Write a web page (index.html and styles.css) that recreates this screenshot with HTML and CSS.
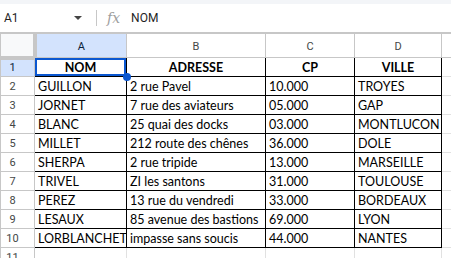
FILE: index.html
```html
<!doctype html>
<html lang="fr">
    <head>
        <meta charset="UTF-8" />
        <title>Feuille</title>
        <link rel="stylesheet" href="styles.css">
    </head>
    <body>
        <div class="topband"></div>
        <div class="formula-bar">
            <div class="namebox">
                <span class="cellref">A1</span>
                <span class="caret"></span>
            </div>
            <div class="divider"></div>
            <span class="fx">fx</span>
            <span class="formula">NOM</span>
        </div>
        <table class="sheet">
            <colgroup>
                <col class="c-row" />
                <col class="c-a" />
                <col class="c-b" />
                <col class="c-c" />
                <col class="c-d" />
                <col />
            </colgroup>
            <thead>
                <tr class="col-heads">
                    <th class="corner"></th>
                    <th class="active">A</th>
                    <th>B</th>
                    <th>C</th>
                    <th>D</th>
                    <th></th>
                </tr>
            </thead>
            <tbody>
                <tr>
                    <th class="rownum active">1</th>
                    <td class="data head selected">NOM<span class="handle"></span></td>
                    <td class="data head">ADRESSE</td>
                    <td class="data head">CP</td>
                    <td class="data head">VILLE</td>
                    <td></td>
                </tr>
                <tr><th class="rownum">2</th><td class="data">GUILLON</td><td class="data">2 rue Pavel</td><td class="data">10.000</td><td class="data">TROYES</td><td></td></tr>
                <tr><th class="rownum">3</th><td class="data">JORNET</td><td class="data">7 rue des aviateurs</td><td class="data">05.000</td><td class="data">GAP</td><td></td></tr>
                <tr><th class="rownum">4</th><td class="data">BLANC</td><td class="data">25 quai des docks</td><td class="data">03.000</td><td class="data">MONTLUCON</td><td></td></tr>
                <tr><th class="rownum">5</th><td class="data">MILLET</td><td class="data">212 route des chênes</td><td class="data">36.000</td><td class="data">DOLE</td><td></td></tr>
                <tr><th class="rownum">6</th><td class="data">SHERPA</td><td class="data">2 rue tripide</td><td class="data">13.000</td><td class="data">MARSEILLE</td><td></td></tr>
                <tr><th class="rownum">7</th><td class="data">TRIVEL</td><td class="data">ZI les santons</td><td class="data">31.000</td><td class="data">TOULOUSE</td><td></td></tr>
                <tr><th class="rownum">8</th><td class="data">PEREZ</td><td class="data">13 rue du vendredi</td><td class="data">33.000</td><td class="data">BORDEAUX</td><td></td></tr>
                <tr><th class="rownum">9</th><td class="data">LESAUX</td><td class="data">85 avenue des bastions</td><td class="data">69.000</td><td class="data">LYON</td><td></td></tr>
                <tr><th class="rownum">10</th><td class="data">LORBLANCHET</td><td class="data">impasse sans soucis</td><td class="data">44.000</td><td class="data">NANTES</td><td></td></tr>
                <tr><th class="rownum">11</th><td></td><td></td><td></td><td></td><td></td></tr>
            </tbody>
        </table>
    </body>
</html>
```

FILE: styles.css
```css
body {
    margin: 0;
    background-color: #fff;
    font-family: Roboto, "Liberation Sans", sans-serif;
    overflow: hidden;
}
.topband {
    height: 4px;
    background-color: #f3f5f8;
}
.formula-bar {
    display: flex;
    align-items: center;
    height: 29px;
    border-bottom: 1px solid #c7c7c7;
    box-sizing: border-box;
    color: #1f1f1f;
    font-size: 12px;
}
.namebox {
    display: flex;
    align-items: center;
    justify-content: space-between;
    width: 82px;
    padding-left: 4px;
    box-sizing: border-box;
}
.caret {
    width: 0;
    height: 0;
    border-left: 4px solid transparent;
    border-right: 4px solid transparent;
    border-top: 4px solid #444;
}
.divider {
    width: 1px;
    height: 16px;
    margin-left: 14px;
    background-color: #c7c7c7;
}
.fx {
    margin-left: 10px;
    font-family: "DejaVu Serif", serif;
    font-style: italic;
    font-size: 14px;
    color: #9e9e9e;
}
.formula {
    margin-left: 11px;
}
.sheet {
    border-collapse: collapse;
    table-layout: fixed;
    width: 470px;
}
.c-row { width: 34px; }
.c-a { width: 92px; }
.c-b { width: 139px; }
.c-c { width: 89px; }
.c-d { width: 87px; }
.sheet th,
.sheet td {
    padding: 0;
    height: 19px;
    border: 1px solid #e1e1e1;
    box-sizing: border-box;
}
.col-heads th {
    height: 24px;
    font-weight: normal;
    font-size: 11px;
    color: #444746;
    border-color: #c7c7c7;
    text-align: center;
    padding-top: 1px;
}
.col-heads th.active {
    background-color: #d3e3fd;
    color: #0b1f3a;
}
.corner {
    background-color: #f8f9fa;
    border-right: 4px solid #c7c7c7 !important;
    border-bottom: 4px solid #c7c7c7 !important;
}
.rownum {
    font-weight: normal;
    font-size: 11px;
    color: #444746;
    text-align: center;
    padding-right: 10px !important;
    border-color: #c7c7c7 !important;
}
.rownum.active {
    background-color: #d3e3fd;
    color: #0b1f3a;
}
.data {
    position: relative;
    border: 1px solid #000 !important;
    font-family: Lato, "Liberation Sans", sans-serif;
    font-size: 12.5px;
    color: #000;
    white-space: nowrap;
    overflow: hidden;
    vertical-align: bottom;
    padding: 0 3px 1px !important;
    line-height: 15px;
}
.data.head {
    font-weight: bold;
    text-align: center;
}
.data.selected {
    overflow: visible;
    box-shadow: inset 0 0 0 2px #0b57d0;
}
.handle {
    position: absolute;
    right: -5px;
    bottom: -5px;
    width: 8px;
    height: 8px;
    border-radius: 50%;
    background-color: #0b57d0;
    z-index: 2;
}
```
